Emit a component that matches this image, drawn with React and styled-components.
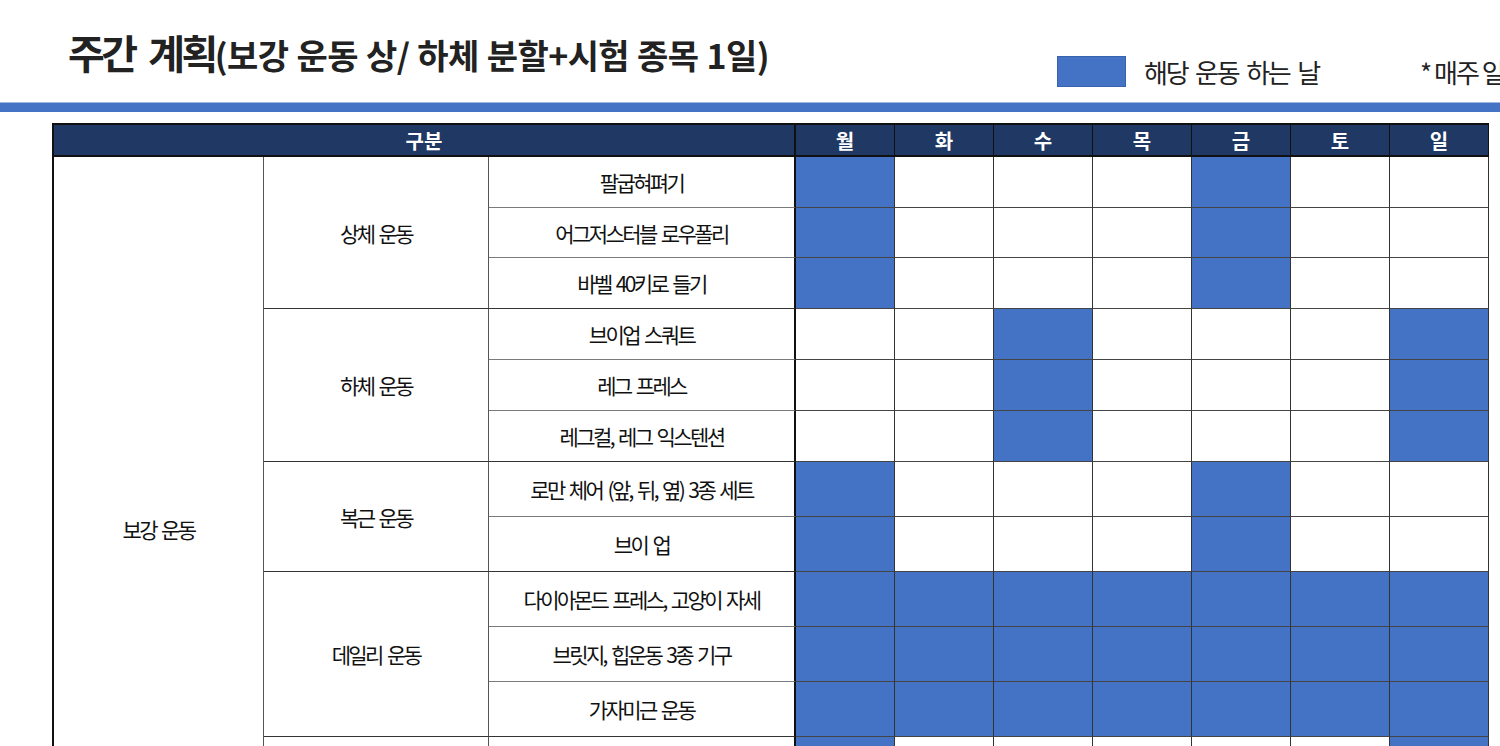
import React from 'react';
import styled, { createGlobalStyle } from 'styled-components';

const DAYS = ['월', '화', '수', '목', '금', '토', '일'];

// each group: label in column 2, its exercises, and on which days they are done
const GROUPS = [
  {
    name: '상체 운동',
    rows: [
      { text: '팔굽혀펴기', h: 51, on: [1, 0, 0, 0, 1, 0, 0] },
      { text: '어그저스터블 로우폴리', h: 50, on: [1, 0, 0, 0, 1, 0, 0] },
      { text: '바벨 40키로 들기', h: 51, on: [1, 0, 0, 0, 1, 0, 0] },
    ],
  },
  {
    name: '하체 운동',
    rows: [
      { text: '브이업 스쿼트', h: 51, on: [0, 0, 1, 0, 0, 0, 1] },
      { text: '레그 프레스', h: 51, on: [0, 0, 1, 0, 0, 0, 1] },
      { text: '레그컬, 레그 익스텐션', h: 51, on: [0, 0, 1, 0, 0, 0, 1] },
    ],
  },
  {
    name: '복근 운동',
    rows: [
      { text: '로만 체어 (앞, 뒤, 옆) 3종 세트', h: 55, on: [1, 0, 0, 0, 1, 0, 0] },
      { text: '브이 업', h: 55, on: [1, 0, 0, 0, 1, 0, 0] },
    ],
  },
  {
    name: '데일리 운동',
    rows: [
      { text: '다이아몬드 프레스, 고양이 자세', h: 55, on: [1, 1, 1, 1, 1, 1, 1] },
      { text: '브릿지, 힙운동 3종 기구', h: 55, on: [1, 1, 1, 1, 1, 1, 1] },
      { text: '가자미근 운동', h: 55, on: [1, 1, 1, 1, 1, 1, 1] },
    ],
  },
  {
    name: '',
    rows: [
      { text: '', h: 55, on: [1, 0, 0, 0, 0, 0, 1] },
      { text: '', h: 55, on: [1, 0, 0, 0, 0, 0, 1] },
      { text: '', h: 55, on: [1, 0, 0, 0, 0, 0, 1] },
    ],
  },
];

const allRows = GROUPS.flatMap((g) => g.rows);
const rowTemplate = ['32px', ...allRows.map((r) => `${r.h}px`)].join(' ');

const App = () => {
  return (
    <>
      <GlobalStyle />
      <Page>
        <Header>
          <Title>
            주간 계획<TitleSub>(보강 운동 상/ 하체 분할+시험 종목 1일)</TitleSub>
          </Title>
          <Legend>
            <LegendSwatch />
            <LegendText>해당 운동 하는 날</LegendText>
            <Note>* 매주 일</Note>
          </Legend>
        </Header>
        <Rule />
        <Table $rows={rowTemplate}>
          <HeadCell $span={3}>구분</HeadCell>
          {DAYS.map((d) => (
            <HeadCell key={d}>{d}</HeadCell>
          ))}
          {GROUPS.map((g, gi) =>
            g.rows.map((r, ri) => (
              <React.Fragment key={`${gi}-${ri}`}>
                {gi === 0 && ri === 0 && (
                  <Cell $rowSpan={allRows.length}>보강 운동</Cell>
                )}
                {ri === 0 && <Cell $rowSpan={g.rows.length}>{g.name}</Cell>}
                <Cell $divider $soft={ri < g.rows.length - 1}>
                  {r.text}
                </Cell>
                {r.on.map((v, di) => (
                  <DayCell key={di} $on={!!v} />
                ))}
              </React.Fragment>
            ))
          )}
        </Table>
      </Page>
    </>
  );
};

const GlobalStyle = createGlobalStyle`
  html, body {
    margin: 0;
    padding: 0;
    overflow: hidden;
    background: #fff;
  }
  body {
    font-family: "Noto Sans CJK KR", "Noto Sans", sans-serif;
    color: #111;
  }
`;

const Page = styled.div`
  width: 1500px;
  height: 746px;
  overflow: hidden;
`;

const Header = styled.header`
  display: flex;
  align-items: flex-start;
  height: 100px;
  padding-left: 68px;
  white-space: nowrap;
`;

const Title = styled.h1`
  margin: 32px 0 0;
  width: 989px;
  flex: none;
  font-size: 40px;
  line-height: 40px;
  font-weight: 700;
  letter-spacing: -3.5px;
  word-spacing: 8px;
  color: #222;
`;

const TitleSub = styled.span`
  font-size: 34px;
  letter-spacing: -0.6px;
  word-spacing: 1px;
`;

const Legend = styled.div`
  display: flex;
  align-items: center;
  margin-top: 56px;
`;

const LegendSwatch = styled.div`
  width: 69px;
  height: 31px;
  box-sizing: border-box;
  background: #4472c4;
  border: 1px solid #3a63ad;
  flex: none;
`;

const LegendText = styled.span`
  width: 294px;
  padding-left: 18px;
  box-sizing: border-box;
  font-size: 26px;
  line-height: 31px;
  letter-spacing: -2.2px;
  word-spacing: 4px;
  color: #222;
  flex: none;
`;

const Note = styled.span`
  font-size: 26px;
  line-height: 31px;
  letter-spacing: -2px;
  word-spacing: 0px;
  color: #222;
`;

const Rule = styled.div`
  height: 9px;
  margin-top: 2px;
  background: #4472c4;
  border-top: 1px solid #9fb6e0;
`;

const Table = styled.div`
  display: grid;
  grid-template-columns: 210px 225px 307px repeat(7, 99px);
  grid-template-rows: ${(p) => p.$rows};
  margin: 11px 0 0 52px;
  width: max-content;
  border-top: 2px solid #111;
  border-left: 2px solid #111;
`;

const HeadCell = styled.div`
  grid-column: span ${(p) => p.$span || 1};
  box-sizing: border-box;
  display: flex;
  align-items: center;
  justify-content: center;
  background: #203864;
  color: #fff;
  font-size: 20px;
  font-weight: 700;
  border-bottom: 2px solid #111;
  border-right: ${(p) => (p.$span ? '2px' : '1px')} solid #111;
`;

const Cell = styled.div`
  grid-row: span ${(p) => p.$rowSpan || 1};
  box-sizing: border-box;
  display: flex;
  align-items: center;
  justify-content: center;
  background: #fff;
  font-size: 21px;
  letter-spacing: -2.6px;
  word-spacing: 3px;
  white-space: pre;
  color: #111;
  border-bottom: 1px solid ${(p) => (p.$soft ? '#7a7a7a' : '#333')};
  border-right: ${(p) => (p.$divider ? '2px solid #111' : '1px solid #555')};
`;

const DayCell = styled.div`
  box-sizing: border-box;
  background: ${(p) => (p.$on ? '#4472c4' : '#fff')};
  border-right: 1px solid #333;
  border-bottom: 1px solid #444;
`;

export default App;
